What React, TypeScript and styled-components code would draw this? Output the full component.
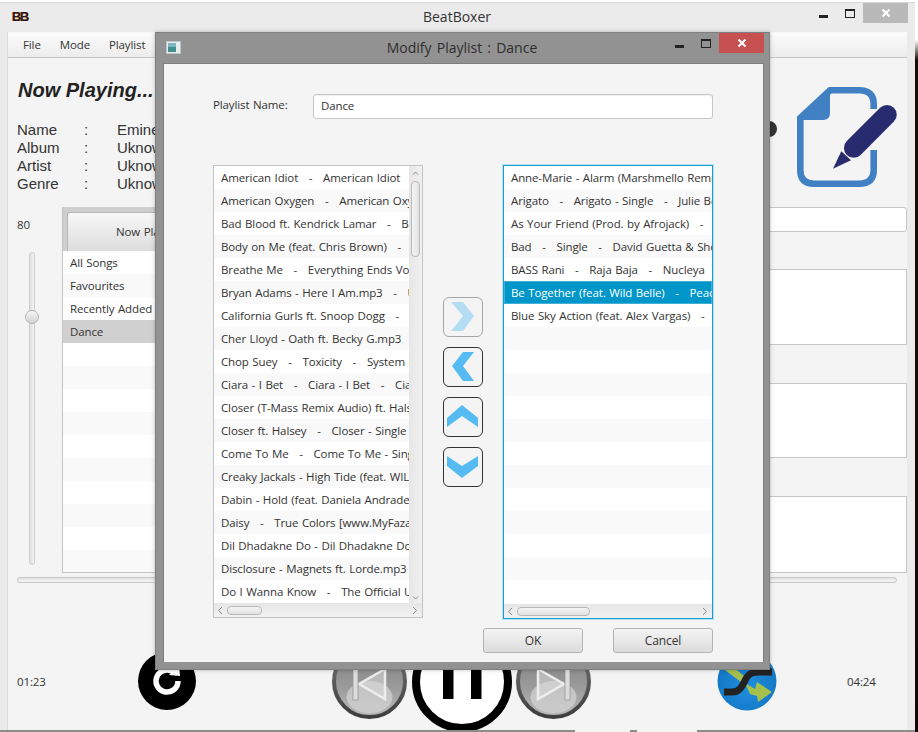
import React from "react";
import styled, { createGlobalStyle } from "styled-components";

const Global = createGlobalStyle`
  html, body { margin: 0; padding: 0; background: #fff; }
  * { box-sizing: border-box; }
  body {
    font-family: "Open Sans", "Noto Sans", sans-serif;
    font-size: 11.5px;
    letter-spacing: -0.12px;
    word-spacing: 0.7px;
    color: #333;
  }
`;

const Screen = styled.div`
  position: relative;
  width: 918px;
  height: 732px;
  overflow: hidden;
  background: linear-gradient(180deg, #ffffff 0, #ffffff 40px, #1a0d08 60px, #120805 100%);
`;

const Window = styled.div`
  width: 915px;
  height: 730px;
  margin-top: 0;
  background: #ebebeb;
  border-top: 2px solid #fff;
  display: flex;
  flex-direction: column;
  overflow: hidden;
`;

const ChromeBar = styled.div`
  height: 30px;
  flex: none;
  display: flex;
  align-items: flex-start;
  border-top: 1px solid #d8d8d8;
  position: relative;
`;

const AppLogo = styled.span`
  margin: 7px 0 0 12px;
  font: bold 13px/13px "Liberation Sans", sans-serif;
  letter-spacing: -1.5px;
  color: #2b1810;
  text-shadow: -0.5px -0.5px 0 #c8702a;
`;

const ChromeTitle = styled.div`
  position: absolute;
  left: 0;
  right: 0;
  top: 4px;
  padding-right: 1px;
  text-align: center;
  font-size: 14px;
  letter-spacing: 0;
  line-height: 20px;
  color: #333;
`;

const ChromeControls = styled.div`
  margin-left: auto;
  margin-right: 7px;
  display: flex;
  align-items: flex-start;
`;

const MinGlyph = styled.span<{ $left: number; $top: number }>`
  display: block;
  width: 9px;
  height: 3px;
  background: #222;
  margin: ${(p) => p.$top}px 0 0 ${(p) => p.$left}px;
`;

const MaxGlyph = styled.span<{ $left: number; $top: number }>`
  display: block;
  width: 10px;
  height: 9px;
  border: 1px solid #222;
  border-top-width: 2px;
  margin: ${(p) => p.$top}px 0 0 ${(p) => p.$left}px;
`;

const CloseBtn = styled.span<{ $bg: string; $left: number }>`
  display: flex;
  align-items: center;
  justify-content: center;
  width: 45px;
  height: 20px;
  background: ${(p) => p.$bg};
  margin-left: ${(p) => p.$left}px;
`;

const Client = styled.div`
  flex: 1;
  margin: 0 8px 0 7px;
  background: #f4f4f4;
  border-left: 1px solid #dcdcdc;
  display: flex;
  flex-direction: column;
  min-height: 0;
`;

const MenuBar = styled.div`
  height: 26px;
  flex: none;
  display: flex;
  align-items: center;
  padding: 0 0 1px 15px;
  gap: 19px;
  background: linear-gradient(180deg, #fbfbfb, #ececec);
  border-bottom: 1px solid #c4c4c4;
  border-top: 1px solid #f8f8f8;
  color: #333;
`;

const Header = styled.div`
  height: 149px;
  flex: none;
  padding-left: 9px;
  display: flex;
  justify-content: space-between;
`;

const InfoCol = styled.div`
  padding-top: 20px;
`;

const Heading = styled.div`
  font: italic bold 20px/24px "Liberation Sans", sans-serif;
  letter-spacing: 0;
  word-spacing: 0;
  margin-left: 1px;
  color: #222;
`;

const InfoGrid = styled.div`
  margin-top: 19px;
  display: grid;
  grid-template-columns: 67px 33px auto;
  font: 15px/18px "Liberation Sans", sans-serif;
  letter-spacing: 0;
  color: #333;
`;

const HeaderRight = styled.div`
  display: flex;
  align-items: flex-start;
  margin-right: 10px;
  gap: 20px;
`;

const Blob = styled.div`
  width: 16px;
  height: 16px;
  border-radius: 50%;
  background: #333;
  margin-top: 63px;
`;

const DocIcon = styled.svg`
  width: 100px;
  height: 100px;
  margin-top: 29px;
  display: block;
`;

const Middle = styled.div`
  height: 366px;
  flex: none;
  padding-left: 9px;
  display: flex;
`;

const VolumeCol = styled.div`
  width: 45px;
  flex: none;
  padding-top: 10px;
  line-height: 16px;
`;

const VolumeTrack = styled.div`
  position: relative;
  width: 6px;
  height: 313px;
  margin: 19px 0 0 12px;
  border: 1px solid #cfcfcf;
  border-radius: 3px;
  background: linear-gradient(90deg, #dedede, #f4f4f4);
`;

const VolumeThumb = styled.div`
  position: absolute;
  left: -5px;
  top: 57px;
  width: 14px;
  height: 14px;
  border-radius: 50%;
  border: 1px solid #b4b4b4;
  background: linear-gradient(180deg, #f6f6f6, #d2d2d2);
`;

const TabPane = styled.div`
  width: 430px;
  flex: none;
  display: flex;
  flex-direction: column;
  border: 1px solid #c4c4c4;
  border-top: none;
`;

const TabHeader = styled.div`
  height: 44px;
  flex: none;
  padding: 5px 0 0 4px;
  background: #cfcfcf;
`;

const Tab = styled.div`
  width: 163px;
  height: 39px;
  padding-bottom: 2px;
  display: flex;
  align-items: center;
  justify-content: center;
  border: 1px solid #b8b8b8;
  border-bottom: none;
  border-radius: 3px 3px 0 0;
  background: linear-gradient(180deg, #f8f8f8, #dcdcdc);
`;

const Row = styled.div<{ $alt?: boolean; $sel?: boolean; $active?: boolean; $pad: number }>`
  height: 23px;
  flex: none;
  padding-left: ${(p) => p.$pad}px;
  line-height: 23px;
  white-space: pre;
  overflow: hidden;
  color: ${(p) => (p.$active ? "#fff" : "#333")};
  background: ${(p) =>
    p.$active ? "#0096c9" : p.$sel ? "#d0d0d0" : p.$alt ? "#f9f9f9" : "#fff"};
  box-shadow: ${(p) => (p.$active ? "inset 0 0 0 1px #3fb1d8" : "none")};
`;

const RowsBox = styled.div`
  flex: 1;
  min-width: 0;
  min-height: 0;
  display: flex;
  flex-direction: column;
  overflow: hidden;
  background: #fff;
`;

const SideCol = styled.div`
  width: 406px;
  margin-left: auto;
  display: flex;
  flex-direction: column;
  gap: 38px;
`;

const SearchBox = styled.div`
  height: 25px;
  margin-bottom: -1px;
  background: #fff;
  border: 1px solid #c6c6c6;
  border-radius: 3px;
`;

const SideBox = styled.div<{ $h: number }>`
  height: ${(p) => p.$h}px;
  background: #fff;
  border: 1px solid #c6c6c6;
`;

const Progress = styled.div`
  height: 6px;
  flex: none;
  margin: 4px 10px 0 9px;
  border: 1px solid #c8c8c8;
  border-radius: 3px;
  background: linear-gradient(180deg, #e2e2e2, #f6f6f6);
`;

const Controls = styled.div`
  flex: none;
  height: 98px;
  margin-top: 49px;
  padding-left: 9px;
  display: flex;
  align-items: center;
`;

const TimeLabel = styled.div<{ $w?: number; $ml?: number }>`
  width: ${(p) => p.$w ?? 40}px;
  margin-left: ${(p) => p.$ml ?? 0}px;
  flex: none;
`;

const CtlSvg = styled.svg<{ $size: number; $ml: number; $dy?: number }>`
  width: ${(p) => p.$size}px;
  height: ${(p) => p.$size}px;
  flex: none;
  margin-left: ${(p) => p.$ml}px;
  margin-top: ${(p) => p.$dy ?? 0}px;
  display: block;
`;

const DefsHolder = styled.svg`
  width: 0;
  height: 0;
  flex: none;
`;

const TaskStrip = styled.div`
  height: 2px;
  flex: none;
  width: 915px;
  background: #8c8c8c;
  display: flex;
  padding-left: 575px;
  gap: 7px;
`;

const TaskItem = styled.div<{ $w: number }>`
  width: ${(p) => p.$w}px;
  background: #f4f4f4;
`;

/* Modal */
const Modal = styled.div`
  position: absolute;
  left: 155px;
  top: 32px;
  width: 615px;
  height: 638px;
  background: #929292;
  border: 1px solid #7f7f7f;
  display: flex;
  flex-direction: column;
  box-shadow: 0 0 4px rgba(0, 0, 0, 0.25);
`;

const ModalBar = styled.div`
  height: 30px;
  flex: none;
  display: flex;
  align-items: flex-start;
  position: relative;
`;

const ModalIcon = styled.svg`
  width: 15px;
  height: 13px;
  margin: 8px 0 0 10px;
  display: block;
`;

const ModalTitle = styled.div`
  position: absolute;
  left: 0;
  right: 0;
  top: 5px;
  padding-right: 1px;
  text-align: center;
  font-size: 14px;
  letter-spacing: 0;
  word-spacing: 1.5px;
  line-height: 20px;
  color: #2e2e2e;
`;

const ModalControls = styled.div`
  margin-left: auto;
  margin-right: 5px;
  display: flex;
  align-items: flex-start;
`;

const ModalBody = styled.div`
  flex: 1;
  margin: 0 5px 7px 7px;
  background: #f4f4f4;
  border: 1px solid #7e7e7e;
  border-width: 1px 1px 0 1px;
  padding: 30px 50px 0 49px;
  display: flex;
  flex-direction: column;
  min-height: 0;
`;

const NameRow = styled.div`
  display: flex;
  align-items: center;
  height: 25px;
`;

const NameLabel = styled.label`
  width: 100px;
  flex: none;
  line-height: 16px;
  margin-top: -3px;
`;

const NameInput = styled.div`
  flex: 1;
  height: 25px;
  line-height: 21px;
  padding-left: 7px;
  background: #fff;
  border: 1px solid #c6c6c6;
  border-radius: 3px;
  box-shadow: inset 0 1px 1px #f0f0f0;
`;

const Lists = styled.div`
  margin-top: 46px;
  display: flex;
  align-items: flex-start;
`;

const ListFrame = styled.div<{ $focus?: boolean }>`
  width: 210px;
  height: ${(p) => (p.$focus ? 454 : 453)}px;
  flex: none;
  display: flex;
  flex-direction: column;
  border: 1px solid ${(p) => (p.$focus ? "#0f9fd2" : "#c4c4c4")};
  box-shadow: ${(p) => (p.$focus ? "0 0 0 1px rgba(60, 180, 230, 0.3)" : "none")};
  overflow: hidden;
  background: #fff;
`;

const ListTop = styled.div`
  flex: 1;
  min-height: 0;
  display: flex;
`;

const VBar = styled.div`
  width: 13px;
  flex: none;
  background: linear-gradient(90deg, #e6e6e6, #f1f1f1);
  display: flex;
  flex-direction: column;
  align-items: center;
  padding-top: 3px;
`;

const VThumb = styled.div`
  width: 9px;
  height: 76px;
  margin: 3px 0 0 0;
  border: 1px solid #b9b9b9;
  border-radius: 4px;
  background: linear-gradient(90deg, #f4f4f4, #e2e2e2);
`;

const VDown = styled.div`
  margin-top: auto;
  height: 9px;
  margin-bottom: 1px;
  display: flex;
`;

const HBar = styled.div`
  height: 14px;
  flex: none;
  display: flex;
  align-items: center;
  background: linear-gradient(180deg, #e6e6e6, #f1f1f1);
  padding: 0 4px 0 3px;
`;

const HThumb = styled.div<{ $w: number }>`
  width: ${(p) => p.$w}px;
  height: 9px;
  margin-left: 3px;
  border: 1px solid #b9b9b9;
  border-radius: 4px;
  background: linear-gradient(180deg, #f4f4f4, #e2e2e2);
`;

const HEnd = styled.div`
  margin-left: auto;
  display: flex;
`;

const Chevron = styled.svg`
  width: 7px;
  height: 9px;
  display: block;
`;

const ArrowCol = styled.div`
  width: 40px;
  margin: 132px 20px 0;
  flex: none;
  display: flex;
  flex-direction: column;
  gap: 10px;
`;

const ArrowBtn = styled.button<{ $off?: boolean }>`
  width: 40px;
  height: 40px;
  padding: 0;
  display: block;
  border: 1px solid #333;
  border-radius: 6px;
  background: #f4f4f4;
  opacity: ${(p) => (p.$off ? 0.4 : 1)};
`;

const ArrowSvg = styled.svg`
  width: 40px;
  height: 40px;
  display: block;
  margin: -1px 0 0 -1px;
  overflow: visible;
  fill: #55bbf2;
`;

const Footer = styled.div`
  margin-top: 9px;
  display: flex;
  justify-content: flex-end;
  gap: 30px;
`;

const FootBtn = styled.button`
  width: 100px;
  height: 25px;
  padding: 0;
  border: 1px solid #b4b4b4;
  border-radius: 3px;
  background: linear-gradient(180deg, #f4f4f4, #dcdcdc);
  color: #333;
  font: 12px "Open Sans", "Noto Sans", sans-serif;
  letter-spacing: -0.1px;
`;

const leftSongs = [
  "American Idiot   -   American Idiot",
  "American Oxygen   -   American Oxygen",
  "Bad Blood ft. Kendrick Lamar   -   Bad Blood",
  "Body on Me (feat. Chris Brown)   -   Body",
  "Breathe Me   -   Everything Ends Vol. 1",
  "Bryan Adams - Here I Am.mp3   -   Unknown",
  "California Gurls ft. Snoop Dogg   -   Teenage",
  "Cher Lloyd - Oath ft. Becky G.mp3",
  "Chop Suey   -   Toxicity   -   System of a Down",
  "Ciara - I Bet   -   Ciara - I Bet   -   Ciara",
  "Closer (T-Mass Remix Audio) ft. Halsey",
  "Closer ft. Halsey   -   Closer - Single",
  "Come To Me   -   Come To Me - Single",
  "Creaky Jackals - High Tide (feat. WILD",
  "Dabin - Hold (feat. Daniela Andrade)",
  "Daisy   -   True Colors [www.MyFaza.com]",
  "Dil Dhadakne Do - Dil Dhadakne Do",
  "Disclosure - Magnets ft. Lorde.mp3",
  "Do I Wanna Know   -   The Official UK",
];

const rightSongs = [
  "Anne-Marie - Alarm (Marshmello Remix)",
  "Arigato   -   Arigato - Single   -   Julie Bergan",
  "As Your Friend (Prod. by Afrojack)   -   Nothing",
  "Bad   -   Single   -   David Guetta & Showtek",
  "BASS Rani   -   Raja Baja   -   Nucleya",
  "Be Together (feat. Wild Belle)   -   Peace is",
  "Blue Sky Action (feat. Alex Vargas)   -   Nero",
];

const tabRows = ["All Songs", "Favourites", "Recently Added", "Dance"];

const XMark = () => (
  <svg width="10" height="10" viewBox="0 0 10 10">
    <path d="M1.5 1.5L8.5 8.5M8.5 1.5L1.5 8.5" stroke="#fff" strokeWidth="2" />
  </svg>
);

const Chev = ({ d }: { d: string }) => (
  <Chevron viewBox="0 0 7 9">
    <path d={d} fill="none" stroke="#8a8a8a" strokeWidth="1" />
  </Chevron>
);

const LeftCh = "M5 1L1.5 4.5L5 8";
const RightCh = "M2 1L5.5 4.5L2 8";

const Arrow = ({ points, off }: { points: string; off?: boolean }) => (
  <ArrowBtn $off={off}>
    <ArrowSvg viewBox="0 0 40 40">
      <polygon points={points} />
    </ArrowSvg>
  </ArrowBtn>
);

const GlossDefs = () => (
  <defs>
    <linearGradient id="skipBody" x1="0" y1="0" x2="0" y2="1">
      <stop offset="0" stopColor="#7c7c7c" />
      <stop offset="0.6" stopColor="#9c9c9c" />
      <stop offset="1" stopColor="#bcbcbc" />
    </linearGradient>
    <linearGradient id="skipRing" x1="0" y1="0" x2="0" y2="1">
      <stop offset="0" stopColor="#777" />
      <stop offset="1" stopColor="#3e3e3e" />
    </linearGradient>
    <radialGradient id="shufBody" cx="0.5" cy="0.6" r="0.6">
      <stop offset="0" stopColor="#1f8fe0" />
      <stop offset="0.85" stopColor="#1478c4" />
      <stop offset="1" stopColor="#4a86b8" />
    </radialGradient>
  </defs>
);

const SkipButton = ({ flip, ml }: { flip?: boolean; ml: number }) => (
  <CtlSvg $size={75} $ml={ml} viewBox="0 0 75 75">
    <g transform={flip ? "translate(75,0) scale(-1,1)" : undefined}>
      <circle cx="37.5" cy="37.5" r="35.5" fill="url(#skipBody)" stroke="url(#skipRing)" strokeWidth="4" />
      <ellipse cx="37.5" cy="53" rx="23" ry="16" fill="#d2d2d2" opacity="0.75" />
      <polygon points="53,25 27,40 53,55" fill="#d8d8d8" fillOpacity="0.55" stroke="#ededed" strokeWidth="2.5" />
      <rect x="21" y="24" width="5" height="32" fill="#dcdcdc" stroke="#8f8f8f" strokeWidth="0.7" />
    </g>
  </CtlSvg>
);

export default function App() {
  return (
    <Screen>
      <Global />
      <Window>
        <ChromeBar>
          <AppLogo>BB</AppLogo>
          <ChromeTitle>BeatBoxer</ChromeTitle>
          <ChromeControls>
            <MinGlyph $left={0} $top={12} />
            <MaxGlyph $left={17} $top={6} />
            <CloseBtn $bg="#b9b9b9" $left={8}>
              <XMark />
            </CloseBtn>
          </ChromeControls>
        </ChromeBar>
        <Client>
          <MenuBar>
            <span>File</span>
            <span>Mode</span>
            <span>Playlist</span>
            <span>Help</span>
          </MenuBar>
          <Header>
            <InfoCol>
              <Heading>Now Playing...</Heading>
              <InfoGrid>
                <span>Name</span><span>:</span><span>Eminem</span>
                <span>Album</span><span>:</span><span>Uknown</span>
                <span>Artist</span><span>:</span><span>Uknown</span>
                <span>Genre</span><span>:</span><span>Uknown</span>
              </InfoGrid>
            </InfoCol>
            <HeaderRight>
              <Blob />
              <DocIcon viewBox="0 0 100 100">
                <path
                  d="M76.7 22V17Q76.7 3.3 62 3.3H33L3.3 31V83Q3.3 96.7 17 96.7H62Q76.7 96.7 76.7 83V63"
                  fill="none"
                  stroke="#4280c4"
                  strokeWidth="6.6"
                />
                <path d="M33 2V26Q33 33 26 33H2Z" fill="#4280c4" />
                <path d="M90 27.7L56.7 61" stroke="#282c6e" strokeWidth="19.5" strokeLinecap="round" />
                <polygon points="36,81.7 44.3,64.3 54,73.3" fill="#282c6e" />
              </DocIcon>
            </HeaderRight>
          </Header>
          <Middle>
            <VolumeCol>
              80
              <VolumeTrack>
                <VolumeThumb />
              </VolumeTrack>
            </VolumeCol>
            <TabPane>
              <TabHeader>
                <Tab>Now Playing</Tab>
              </TabHeader>
              <RowsBox>
                {Array.from({ length: 14 }).map((_, i) => (
                  <Row key={i} $pad={7} $alt={i % 2 === 1} $sel={i === 3}>
                    {tabRows[i] ?? ""}
                  </Row>
                ))}
              </RowsBox>
            </TabPane>
            <SideCol>
              <SearchBox />
              <SideBox $h={76} />
              <SideBox $h={76} />
              <SideBox $h={77} />
            </SideCol>
          </Middle>
          <Progress />
          <Controls>
            <TimeLabel $w={121}>01:23</TimeLabel>
            <CtlSvg $size={58} $ml={0} viewBox="0 0 58 58">
              <circle cx="29" cy="29" r="29" fill="#000" />
              <path d="M36.5 21A11 11 0 1 0 40 29" fill="none" stroke="#fff" strokeWidth="5.5" />
              <polygon points="31,23 42,24 41,13" fill="#fff" />
            </CtlSvg>
            <DefsHolder>
              <GlossDefs />
            </DefsHolder>
            <SkipButton ml={136} />
            <CtlSvg $size={100} $ml={5} $dy={2} viewBox="0 0 100 100">
              <circle cx="50" cy="50" r="46" fill="#fff" stroke="#000" strokeWidth="8" />
              <rect x="31" y="18" width="10.5" height="49" fill="#000" />
              <rect x="59" y="18" width="10.5" height="49" fill="#000" />
            </CtlSvg>
            <SkipButton flip ml={4} />
            <CtlSvg $size={60} $ml={126} viewBox="0 0 60 60">
              <circle cx="30" cy="30" r="29.5" fill="url(#shufBody)" />
              <polygon points="8,19 20,19 28,26 24,31 16,25" fill="#a5c04c" />
              <polygon points="28,32 38,38 40,31 55,41 41,51 40,45 33,43" fill="#a5c04c" />
              <path
                d="M7 41H15C25 41 27 30 30 26C33 22 36 21 42 21H55"
                fill="none"
                stroke="#222"
                strokeWidth="7"
              />
            </CtlSvg>
            <TimeLabel $ml={70}>04:24</TimeLabel>
          </Controls>
        </Client>
      </Window>
      <TaskStrip>
        <TaskItem $w={55} />
        <TaskItem $w={60} />
      </TaskStrip>

      <Modal>
        <ModalBar>
          <ModalIcon viewBox="0 0 15 13">
            <rect x="0.5" y="0.5" width="14" height="12" fill="#e8eef0" stroke="#c4c4c4" />
            <rect x="2" y="2" width="8" height="9" fill="#3f8f8f" />
            <rect x="2" y="2" width="8" height="4" fill="#7fb7c4" />
          </ModalIcon>
          <ModalTitle>Modify Playlist : Dance</ModalTitle>
          <ModalControls>
            <MinGlyph $left={0} $top={12} />
            <MaxGlyph $left={17} $top={6} />
            <CloseBtn $bg="#c75050" $left={8}>
              <XMark />
            </CloseBtn>
          </ModalControls>
        </ModalBar>
        <ModalBody>
          <NameRow>
            <NameLabel>Playlist Name:</NameLabel>
            <NameInput>Dance</NameInput>
          </NameRow>
          <Lists>
            <ListFrame>
              <ListTop>
                <RowsBox>
                  {leftSongs.map((s, i) => (
                    <Row key={s} $pad={7} $alt={i % 2 === 1}>
                      {s}
                    </Row>
                  ))}
                </RowsBox>
                <VBar>
                  <Chev d="M1 5.5L3.5 3L6 5.5" />
                  <VThumb />
                  <VDown>
                    <Chev d="M1 3.5L3.5 6L6 3.5" />
                  </VDown>
                </VBar>
              </ListTop>
              <HBar>
                <Chev d={LeftCh} />
                <HThumb $w={35} />
                <HEnd>
                  <Chev d={RightCh} />
                </HEnd>
              </HBar>
            </ListFrame>
            <ArrowCol>
              <Arrow off points="8,5 20,5 31,19 20,34 8,34 20,19" />
              <Arrow points="31,5 20,5 9,19 20,34 31,34 20,19" />
              <Arrow points="19,8 35,21 35,30 19,19 4,30 4,21" />
              <Arrow points="4,9 19,19 35,9 35,19 19,31 4,19" />
            </ArrowCol>
            <ListFrame $focus>
              <RowsBox>
                {Array.from({ length: 19 }).map((_, i) => (
                  <Row key={i} $pad={7} $alt={i % 2 === 1} $active={i === 5}>
                    {rightSongs[i] ?? ""}
                  </Row>
                ))}
              </RowsBox>
              <HBar>
                <Chev d={LeftCh} />
                <HThumb $w={73} />
                <HEnd>
                  <Chev d={RightCh} />
                </HEnd>
              </HBar>
            </ListFrame>
          </Lists>
          <Footer>
            <FootBtn>OK</FootBtn>
            <FootBtn>Cancel</FootBtn>
          </Footer>
        </ModalBody>
      </Modal>
    </Screen>
  );
}
